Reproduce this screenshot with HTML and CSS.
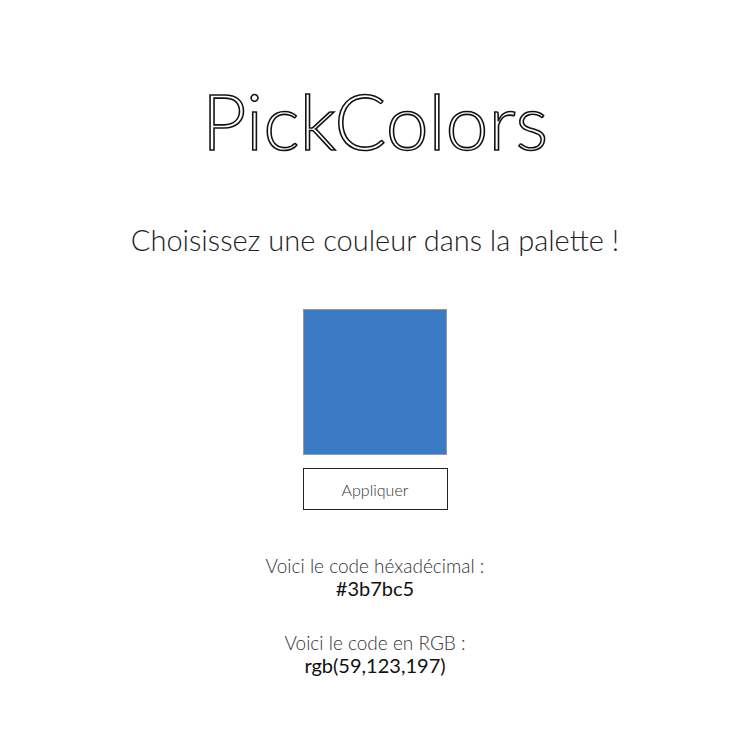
FILE: index.html
```html
<!DOCTYPE html>
<html lang="fr">
<head>
<meta charset="utf-8">
<title>PickColors</title>
<link rel="stylesheet" href="styles.css">
</head>
<body>
<main class="page">
  <h1 class="title">PickColors</h1>
  <p class="subtitle">Choisissez une couleur dans la palette !</p>
  <div class="picker">
    <div class="swatch"></div>
    <button class="apply" type="button">Appliquer</button>
  </div>
  <div class="result">
    <p class="label">Voici le code héxadécimal :</p>
    <p class="code">#3b7bc5</p>
  </div>
  <div class="result">
    <p class="label">Voici le code en RGB :</p>
    <p class="code">rgb(59,123,197)</p>
  </div>
</main>
</body>
</html>
```
FILE: styles.css
```css
html, body {
  margin: 0;
  padding: 0;
  background: #ffffff;
}
.page {
  font-family: Lato, "Open Sans", sans-serif;
  font-weight: 300;
  color: #222;
  display: flex;
  flex-direction: column;
  align-items: center;
  padding-top: 72px;
}
.title {
  margin: 0;
  font-size: 77px;
  font-weight: 300;
  line-height: 96px;
  color: #fff;
  -webkit-text-stroke: 1.6px #111;
  letter-spacing: 0;
}
.subtitle {
  margin: 54px 0 0;
  font-size: 29px;
  line-height: 36px;
  color: #222;
}
.picker {
  margin-top: 51px;
  display: flex;
  flex-direction: column;
  align-items: center;
  gap: 13px;
}
.swatch {
  width: 142px;
  height: 144px;
  background: #3b7bc5;
  border: 1px solid #9a9a9a;
}
.apply {
  width: 145px;
  height: 42px;
  background: #fff;
  border: 1px solid #222;
  font-family: Lato, sans-serif;
  font-weight: 300;
  font-size: 16px;
  color: #333;
  padding: 0;
}
.result {
  display: flex;
  flex-direction: column;
  align-items: center;
}
.result + .result { margin-top: 31px; }
.picker + .result { margin-top: 44px; }
.label {
  margin: 0;
  font-size: 19px;
  line-height: 23px;
  color: #333;
}
.code {
  margin: 0;
  font-size: 20px;
  line-height: 23px;
  font-weight: 400;
  color: #111;
}
```
